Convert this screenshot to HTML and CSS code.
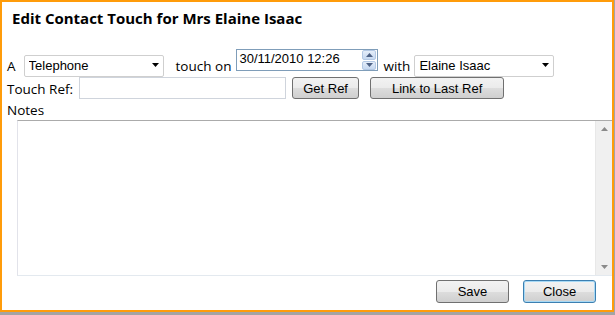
FILE: index.html
```html
<!DOCTYPE html>
<html lang="en">
<head>
    <meta charset="UTF-8">
    <title>Edit Contact Touch</title>
    <link rel="stylesheet" href="styles.css">
</head>
<body>
    <div class="dialog">
        <h1 class="title">Edit Contact Touch for Mrs Elaine Isaac</h1>
        <form class="touch-form">
            <div class="row row-touch">
                <label class="lbl lbl-a">A</label>
                <span class="select-wrap">
                    <select class="select"><option>Telephone</option></select>
                    <svg class="arrow" width="7" height="4" viewBox="0 0 7 4"><path d="M0 0h7L3.5 4z" fill="#000"/></svg>
                </span>
                <label class="lbl lbl-on">touch on</label>
                <span class="datetime">
                    <input class="dt-input" type="text" value="30/11/2010 12:26">
                    <span class="spin">
                        <span class="spin-btn"><svg width="7" height="4" viewBox="0 0 7 4"><path d="M0 4h7L3.5 0z" fill="#4d6185"/></svg></span>
                        <span class="spin-btn"><svg width="7" height="4" viewBox="0 0 7 4"><path d="M0 0h7L3.5 4z" fill="#4d6185"/></svg></span>
                    </span>
                </span>
                <label class="lbl lbl-with">with</label>
                <span class="select-wrap">
                    <select class="select"><option>Elaine Isaac</option></select>
                    <svg class="arrow" width="7" height="4" viewBox="0 0 7 4"><path d="M0 0h7L3.5 4z" fill="#000"/></svg>
                </span>
            </div>
            <div class="row row-ref">
                <label class="lbl lbl-ref">Touch Ref:</label>
                <input class="ref-input" type="text">
                <button type="button" class="btn btn-get">Get Ref</button>
                <button type="button" class="btn btn-link">Link to Last Ref</button>
            </div>
            <label class="lbl notes-label">Notes</label>
            <div class="notes">
                <textarea class="notes-text"></textarea>
                <div class="scrollbar">
                    <svg width="7" height="4" viewBox="0 0 7 4"><path d="M0 4h7L3.5 0z" fill="#8a8a8a"/></svg>
                    <svg width="7" height="4" viewBox="0 0 7 4"><path d="M0 0h7L3.5 4z" fill="#8a8a8a"/></svg>
                </div>
            </div>
            <div class="actions">
                <button type="button" class="btn btn-action">Save</button>
                <button type="button" class="btn btn-action btn-focus">Close</button>
            </div>
        </form>
    </div>
</body>
</html>
```

FILE: styles.css
```css
body {
    margin: 0;
    width: 615px;
    height: 315px;
    background: #a4a4a4; /* page behind the dialog */
}

.dialog {
    box-sizing: border-box;
    width: 614px;
    height: 312px;
    background: #fff;
    border: 2px solid #ff9c0a;
    font-family: "Open Sans", "Noto Sans", sans-serif;
    color: #000;
}

.title {
    margin: 0;
    padding: 6px 10px 0;
    font-size: 15px;
    line-height: 20px;
    font-weight: 700;
}

.touch-form {
    padding: 0 0 0 5px;
}

.row {
    display: flex;
    align-items: flex-start;
}
.row-touch {
    margin-top: 21px;
    height: 28px;
}
.row-ref {
    height: 22px;
}

.lbl {
    font-size: 13.5px;
    line-height: 18px;
}
.lbl-a { margin: 8px 8px 0 0; }
.lbl-on { margin: 8px 5px 0 12px; }
.lbl-with { margin: 8px 4px 0 5px; }
.lbl-ref { margin: 3px 6px 0 0; }

.select-wrap {
    position: relative;
    margin-top: 4px;
}
.select {
    appearance: none;
    -webkit-appearance: none;
    box-sizing: border-box;
    width: 140px;
    height: 22px;
    padding: 0 0 0 4px;
    border: 1px solid #cfcfcf;
    border-radius: 2px;
    background: #fff;
    font: 13px "Liberation Sans", Arial, sans-serif;
    color: #000;
}
.arrow {
    position: absolute;
    right: 5px;
    top: 10px;
}

.datetime {
    display: flex;
    box-sizing: border-box;
    width: 142px;
    height: 22px;
    border: 1px solid #7f9db9;
}
.dt-input {
    flex: 1;
    min-width: 0;
    border: none;
    padding: 1px 2px 4px;
    font: 13px "Liberation Sans", Arial, sans-serif;
    outline: none;
}
.spin {
    display: flex;
    flex-direction: column;
    gap: 1px;
    width: 14px;
    padding: 0 1px 0 0;
}
.spin-btn {
    flex: 1;
    display: flex;
    align-items: center;
    justify-content: center;
    border: 1px solid #b3c8e4;
    border-radius: 2px;
    background: linear-gradient(#e4edf9, #c6d8f0);
}

.ref-input {
    box-sizing: border-box;
    width: 207px;
    height: 22px;
    border: 1px solid #cfd4dc;
    padding: 0 3px;
    font: 13px "Liberation Sans", Arial, sans-serif;
}

.btn {
    box-sizing: border-box;
    height: 22px;
    padding: 0;
    border: 1px solid #707070;
    border-radius: 3px;
    background: linear-gradient(#f2f2f2 0%, #ebebeb 50%, #dddddd 51%, #cfcfcf 100%);
    font: 13px "Liberation Sans", Arial, sans-serif;
    color: #000;
}
.btn-get {
    width: 67px;
    margin-left: 6px;
}
.btn-link {
    width: 134px;
    margin-left: 11px;
}

.notes-label {
    display: block;
    margin-top: 2px;
}

.notes {
    display: flex;
    box-sizing: border-box;
    height: 156px;
    margin: 1px 0 0 10px;
    border-top: 1px solid #ababab;
    border-left: 1px solid #e2e3ea;
    border-bottom: 1px solid #e3e9ef;
}
.notes-text {
    flex: 1;
    border: none;
    resize: none;
    outline: none;
    padding: 2px;
}
.scrollbar {
    display: flex;
    flex-direction: column;
    justify-content: space-between;
    align-items: center;
    width: 17px;
    padding: 6px 0 6px;
    box-sizing: border-box;
    background: #f0f0f0;
    border-left: 1px solid #e8e8e8;
}

.actions {
    display: flex;
    justify-content: flex-end;
    gap: 14px;
    margin-top: 4px;
    padding-right: 16px;
}
.btn-action {
    width: 73px;
    height: 23px;
}
.btn-focus {
    border-color: #3c7fb1;
    box-shadow: inset 0 0 0 1px #a7d9f5;
}
```
